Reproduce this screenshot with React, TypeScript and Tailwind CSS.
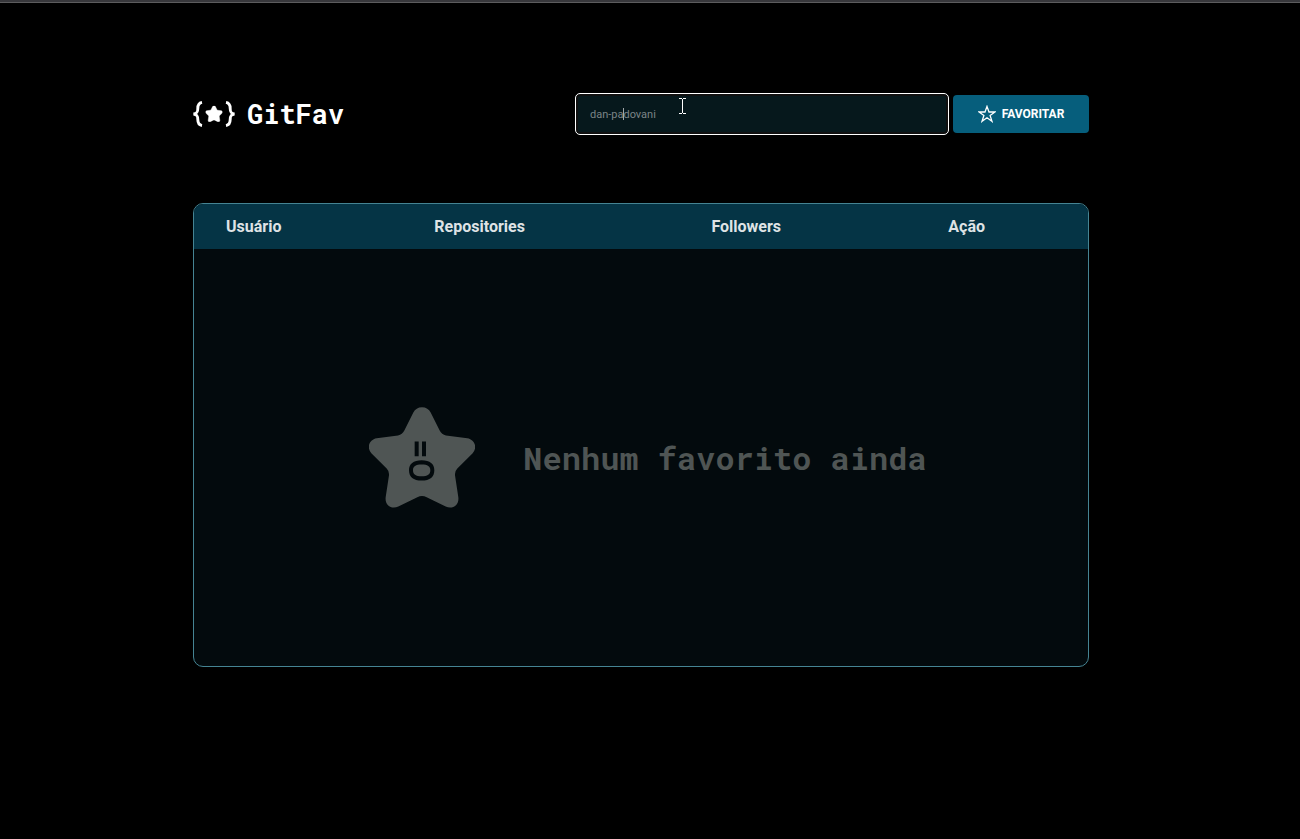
import { useState } from "react";

const STAR =
  "M186 20C198 20 207 26 212 36L239 90Q245 102 258 105L322 113C345 117 353 142 338 158L292 204Q284 212 285 224L295 290C298 314 277 328 257 318L200 290Q186 283 172 290L115 318C95 328 74 314 77 290L87 224Q88 212 80 204L34 158C19 142 27 117 50 113L114 105Q127 102 133 90L160 36C165 26 174 20 186 20Z";

function Logo() {
  return (
    <svg className="h-[26px] w-[42px]" viewBox="0 0 42 26" fill="none" aria-hidden="true">
      <path
        d="M9 1.4C5.8 2 4.8 4.2 4.8 7.4C4.8 10.8 4.2 12.3 0.6 13C4.2 13.7 4.8 15.2 4.8 18.6C4.8 21.8 5.8 24 9 24.6"
        stroke="currentColor"
        strokeWidth="2.9"
      />
      <path
        d="M33 1.4C36.2 2 37.2 4.2 37.2 7.4C37.2 10.8 37.8 12.3 41.4 13C37.8 13.7 37.2 15.2 37.2 18.6C37.2 21.8 36.2 24 33 24.6"
        stroke="currentColor"
        strokeWidth="2.9"
      />
      <svg x="12.5" y="4.7" width="17" height="16.2" viewBox="27 20 318 302">
        <path d={STAR} fill="currentColor" stroke="currentColor" strokeWidth="8" />
      </svg>
    </svg>
  );
}

function EmptyStar() {
  return (
    <svg className="h-[101px] w-[106px] shrink-0" viewBox="27 20 318 302" aria-hidden="true">
      <path d={STAR} fill="#4f5554" />
      <path d="M164 123H176V167H164ZM186 123H198V167H186Z" fill="#030a0d" />
      <path
        fillRule="evenodd"
        d="M185 179C210 179 223 190 223 209C223 229 210 240 185 240C160 240 147 229 147 209C147 190 160 179 185 179ZM185 192C167 192 159 198 159 209C159 221 167 227 185 227C203 227 211 221 211 209C211 198 203 192 185 192Z"
        fill="#030a0d"
      />
    </svg>
  );
}

export default function App() {
  const [user, setUser] = useState("");

  return (
    <div className="min-h-screen border-t-2 border-[#37373b] bg-black font-['Roboto',sans-serif]">
      <div className="h-px bg-[#5c5c5e]" />
      <div className="pr-[18px] pt-[90px]">
        <main className="mx-auto max-w-4xl">
          <header className="flex items-center justify-between">
            <h1 className="flex items-center gap-3 font-['Roboto_Mono','Liberation_Mono',monospace] text-[27px] leading-8 font-bold text-white">
              <Logo />
              GitFav
            </h1>
            <form className="flex items-center gap-1" onSubmit={(e) => e.preventDefault()}>
              <div className="relative">
                <input
                  aria-label="Usuário"
                  value={user}
                  onChange={(e) => setUser(e.target.value)}
                  placeholder="dan-padovani"
                  className="block h-[42px] w-[374px] rounded-[5px] border border-white bg-[#06181c] px-3.5 text-[11px] text-white ring-2 ring-[#101010] outline-none ring-inset placeholder:text-[#7b8487]"
                />
                <span className="absolute top-[15px] left-12 h-3 w-px bg-[#a0a6a8]" />
                <svg
                  className="absolute top-[5px] left-[104px] h-4 w-[7px]"
                  viewBox="0 0 7 16"
                  stroke="white"
                  fill="none"
                  aria-hidden="true"
                >
                  <path d="M0 .5H3M4 .5H7M3.5 1V15M0 15.5H3M4 15.5H7" />
                </svg>
              </div>
              <button
                type="submit"
                className="flex h-[38px] w-[136px] items-center justify-center gap-1.5 rounded bg-[#065e7c] text-xs font-bold text-white uppercase"
              >
                <svg
                  className="size-[18px]"
                  viewBox="0 0 18 18"
                  fill="none"
                  stroke="currentColor"
                  strokeWidth="1.3"
                  aria-hidden="true"
                >
                  <path d="M9 1.4L11 7H17L12.1 10.4L14 16.3L9 12.8L4 16.3L5.9 10.4L1 7H7Z" />
                </svg>
                Favoritar
              </button>
            </form>
          </header>

          <div className="mt-[68px] overflow-hidden rounded-[10px] border border-[#458493] bg-[#030a0d]">
            <table className="w-full table-fixed text-left">
              <thead className="bg-[#053445] text-base leading-[21px] text-[#dfe3e5]">
                <tr>
                  <th className="w-[23.3%] py-3 pl-8 font-bold">Usuário</th>
                  <th className="w-[31%] py-3 pl-8 font-bold">Repositories</th>
                  <th className="w-[26.5%] py-3 pl-8 font-bold">Followers</th>
                  <th className="py-3 pl-8 font-bold">Ação</th>
                </tr>
              </thead>
              <tbody>
                <tr>
                  <td colSpan={4} className="h-[417px] pl-3.5">
                    <div className="flex items-center justify-center gap-12">
                      <EmptyStar />
                      <p className="font-['Roboto_Mono','Liberation_Mono',monospace] text-[32px] leading-10 font-bold text-[#4f5554]">
                        Nenhum favorito ainda
                      </p>
                    </div>
                  </td>
                </tr>
              </tbody>
            </table>
          </div>
        </main>
      </div>
    </div>
  );
}
